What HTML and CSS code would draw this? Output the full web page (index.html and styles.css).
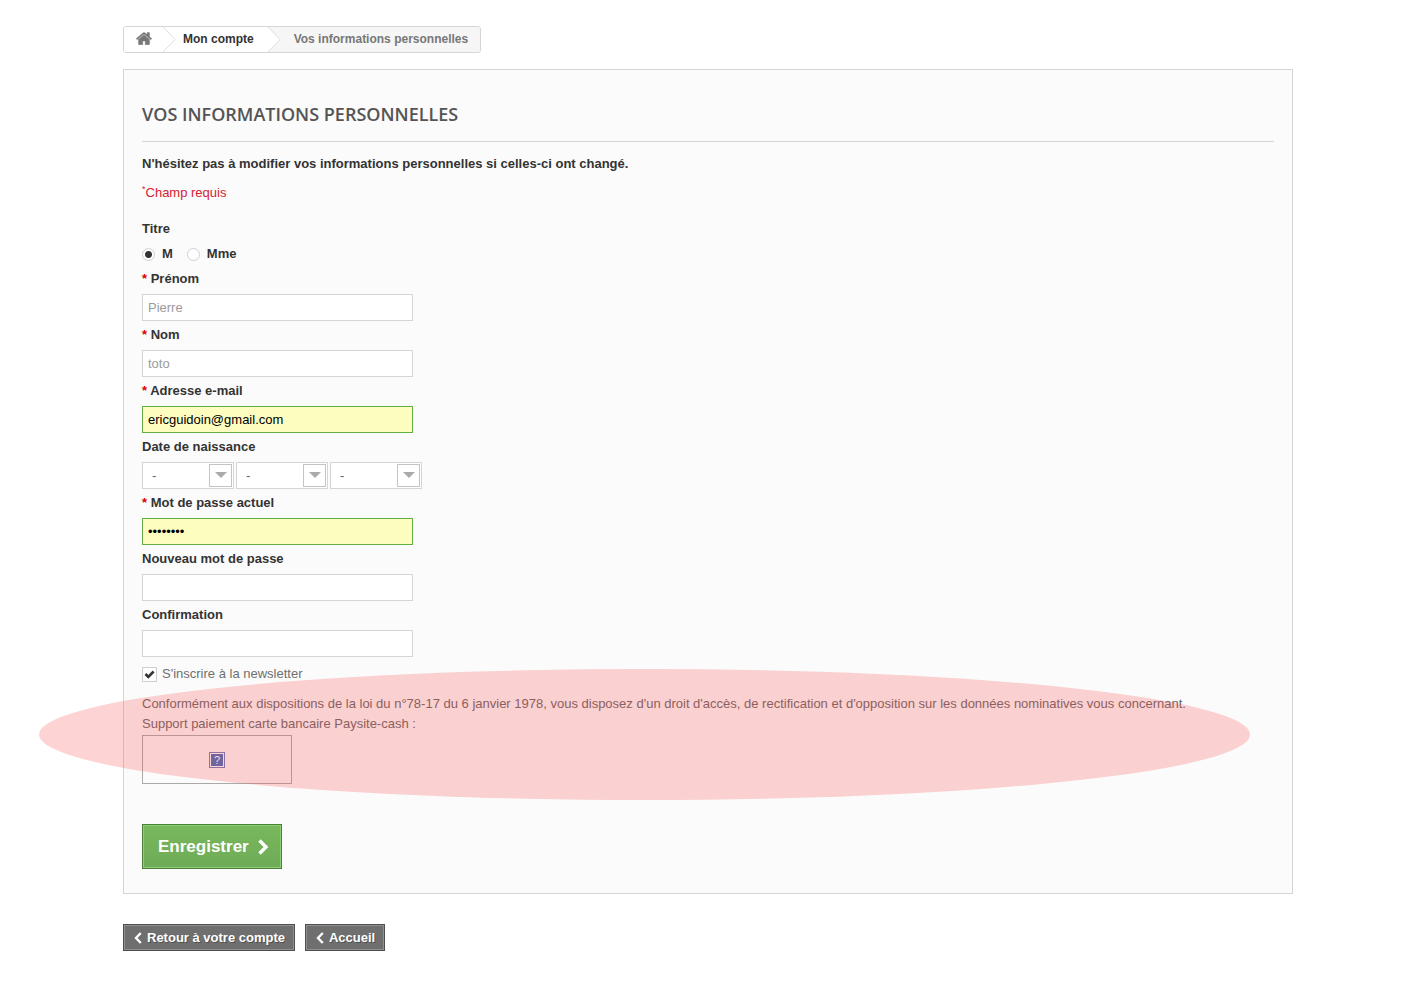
FILE: index.html
```html
<!DOCTYPE html>
<html lang="fr">
<head>
<meta charset="utf-8">
<title>Vos informations personnelles</title>
<meta name="viewport" content="width=device-width, initial-scale=1">
<link rel="stylesheet" href="styles.css">
</head>
<body>
<main class="page">
  <nav class="breadcrumb" aria-label="Fil d'Ariane">
    <a class="crumb crumb-home" href="#" aria-label="Accueil">
      <svg width="16" height="13" viewBox="0 230 1664 1320" aria-hidden="true"><path d="M1408 992v480q0 26-19 45t-45 19h-384v-384h-256v384h-384q-26 0-45-19t-19-45v-480q0-1 .5-3t.5-3l575-474 575 474q1 2 1 6zm223-69l-62 74q-8 9-21 11h-3q-13 0-21-7l-692-577-692 577q-12 8-24 7-13-2-21-11l-62-74q-8-10-7-23.500t11-21.500l719-599q32-26 76-26t76 26l244 204v-195q0-14 9-23t23-9h192q14 0 23 9t9 23v408l219 182q10 8 11 21.500t-7 23.500z" fill="#777" stroke="#777" stroke-width="40"/></svg>
    </a>
    <svg class="crumb-arrow" width="14" height="25" viewBox="0 0 14 25" aria-hidden="true"><path d="M0 0 12 12.500 0 25" fill="#fff" stroke="#ddd"/></svg>
    <a class="crumb" href="#">Mon compte</a>
    <svg class="crumb-arrow crumb-arrow-last" width="14" height="25" viewBox="0 0 14 25" aria-hidden="true"><path d="M0 0 12 12.500 0 25" fill="#fff" stroke="#ddd"/></svg>
    <span class="crumb crumb-current">Vos informations personnelles</span>
  </nav>

  <section class="box">
    <h1 class="heading">Vos informations personnelles</h1>
    <p class="intro">N'hésitez pas à modifier vos informations personnelles si celles-ci ont changé.</p>
    <p class="required-note"><sup>*</sup>Champ requis</p>

    <form>
      <fieldset class="titles">
        <legend class="label">Titre</legend>
        <div class="radio-row">
          <label class="radio-label" for="m"><input class="radio" id="m" type="radio" name="titre" checked>M</label>
          <label class="radio-label" for="mme"><input class="radio" id="mme" type="radio" name="titre">Mme</label>
        </div>
      </fieldset>
      <div class="field">
        <label class="label required" for="prenom">Prénom</label>
        <input class="input" id="prenom" type="text" value="Pierre">
      </div>
      <div class="field">
        <label class="label required" for="nom">Nom</label>
        <input class="input" id="nom" type="text" value="toto">
      </div>
      <div class="field">
        <label class="label required" for="email">Adresse e-mail</label>
        <input class="input filled" id="email" type="email" value="ericguidoin@gmail.com">
      </div>
      <div class="field">
        <label class="label" for="jour">Date de naissance</label>
        <div class="selects">
          <span class="select-wrap"><select class="select" id="jour"><option>-</option></select></span>
          <span class="select-wrap"><select class="select" aria-label="Mois"><option>-</option></select></span>
          <span class="select-wrap"><select class="select" aria-label="Année"><option>-</option></select></span>
        </div>
      </div>
      <div class="field">
        <label class="label required" for="mdp">Mot de passe actuel</label>
        <input class="input filled" id="mdp" type="password" value="password">
      </div>
      <div class="field">
        <label class="label" for="nouveau">Nouveau mot de passe</label>
        <input class="input" id="nouveau" type="password">
      </div>
      <div class="field">
        <label class="label" for="confirmation">Confirmation</label>
        <input class="input" id="confirmation" type="password">
      </div>
      <label class="newsletter" for="newsletter"><input class="checkbox" id="newsletter" type="checkbox" checked>S'inscrire à la newsletter</label>

      <div class="legal">
        <p class="legal-text">Conformément aux dispositions de la loi du n°78-17 du 6 janvier 1978, vous disposez d'un droit d'accès, de rectification et d'opposition sur les données nominatives vous concernant.<br>Support paiement carte bancaire Paysite-cash :</p>
        <div class="payment">
          <span class="missing">?</span>
        </div>
        <div class="highlight"></div>
      </div>

      <button class="save" type="submit">Enregistrer
        <svg width="12" height="16" viewBox="0 0 12 16" aria-hidden="true"><path d="M2.500 1.500 9 8l-6.500 6.500" fill="none" stroke="#fff" stroke-width="3.400"/></svg>
      </button>
    </form>
  </section>

  <div class="footer-links">
    <a class="back" href="#"><svg width="8" height="12" viewBox="0 0 8 12" aria-hidden="true"><path d="M6.800 1 2 6l4.800 5" fill="none" stroke="#fff" stroke-width="2.400"/></svg>Retour à votre compte</a>
    <a class="back" href="#"><svg width="8" height="12" viewBox="0 0 8 12" aria-hidden="true"><path d="M6.800 1 2 6l4.800 5" fill="none" stroke="#fff" stroke-width="2.400"/></svg>Accueil</a>
  </div>
</main>
</body>
</html>
```
FILE: styles.css
```css
*, *::before, *::after { box-sizing: border-box; }
body {
  margin: 0;
  background: #fff;
  color: #6f6f6f;
  font: 13px/20px "Liberation Sans", Arial, sans-serif;
  overflow-x: hidden;
}
p, h1, fieldset { margin: 0; padding: 0; border: 0; }
svg { display: block; flex: none; }
input, select, button { font: inherit; margin: 0; }

.page { padding: 26px 129px 53px 123px; }

.breadcrumb {
  display: inline-flex;
  height: 27px;
  border: 1px solid #d6d4d4;
  border-radius: 3px;
  overflow: hidden;
  font-size: 12px;
  font-weight: bold;
  line-height: 24px;
  vertical-align: top;
}
.crumb { padding: 0 14px 0 6px; color: #333; background: #fff; text-decoration: none; }
.crumb-home { padding: 5px 11px 5px 12px; }
.crumb-arrow-last { background: #f6f6f6; }
.crumb-current { padding: 0 12px; color: #777; background: #f6f6f6; }

.box {
  margin-top: 16px;
  padding: 32px 18px 24px;
  border: 1px solid #d6d4d4;
  background: #fbfbfb;
}
.heading {
  margin-bottom: 12px;
  padding-bottom: 15px;
  border-bottom: 1px solid #d6d4d4;
  color: #555454;
  font: 600 18px/24px "Open Sans", sans-serif;
  text-transform: uppercase;
}
.intro { color: #333; font-weight: bold; }
.required-note { margin: 9px 0 16px; color: #d5202f; }
.required-note sup { font-size: 9px; line-height: 0; }

.label { display: block; padding: 0; color: #333; font-weight: bold; }
.required::before { content: "* "; color: #e00000; }
.radio-row { display: flex; gap: 14px; margin: 5px 0; }
.radio-label { display: flex; align-items: center; gap: 7px; color: #333; font-weight: bold; }
.radio, .checkbox {
  appearance: none;
  flex: none;
  border: 1px solid #d0d0d0;
  background: #fff;
}
.radio { width: 13px; height: 13px; border-radius: 50%; }
.radio:checked { background: radial-gradient(circle, #333 0 3px, #fff 4px); }

.field { display: flex; flex-direction: column; gap: 5px; margin-bottom: 4px; }
.input {
  width: 271px;
  height: 27px;
  padding: 0 5px;
  border: 1px solid #d6d4d4;
  border-radius: 0;
  background: #fff;
  color: #9c9b9b;
}
.filled { border-color: #62ad44; background: #fdfdc0; color: #000; }

.selects { display: flex; gap: 2px; }
.select-wrap { position: relative; display: flex; }
.select {
  appearance: none;
  width: 92px;
  height: 27px;
  padding: 0 9px;
  border: 1px solid #d6d4d4;
  border-radius: 0;
  background: #fff;
  color: #666;
}
.select-wrap::before {
  content: "";
  position: absolute;
  top: 2px;
  right: 2px;
  width: 23px;
  height: 23px;
  border: 1px solid #c4c4c4;
  background: #fff;
  pointer-events: none;
}
.select-wrap::after {
  content: "";
  position: absolute;
  top: 10px;
  right: 7px;
  border: solid transparent;
  border-width: 6px 6px 0;
  border-top-color: #aaa;
  pointer-events: none;
}

.newsletter { display: flex; align-items: center; gap: 5px; margin-top: 7px; }
.checkbox {
  width: 15px;
  height: 15px;
  background: #fff url("data:image/svg+xml,%3Csvg xmlns='http://www.w3.org/2000/svg' viewBox='0 0 13 13'%3E%3Cpath d='M2.500 6 5.300 8.800 10.600 3.500' fill='none' stroke='%23333' stroke-width='2.600'/%3E%3C/svg%3E") center / 13px 13px no-repeat;
}

.legal { position: relative; margin-top: 10px; }
.legal-text { margin-bottom: 1px; color: #666; }
.payment {
  display: flex;
  align-items: center;
  justify-content: center;
  width: 150px;
  height: 49px;
  border: 1px solid #aaa;
}
.missing {
  width: 16px;
  height: 16px;
  border: 1px solid #6a7cc0;
  outline: 1px solid #fff;
  outline-offset: -2px;
  background: #3f6cbc;
  color: #fff;
  font-size: 11px;
  line-height: 14px;
  text-align: center;
}
.highlight {
  position: absolute;
  top: -25px;
  left: -103px;
  width: calc(100% + 79px);
  height: 131px;
  border-radius: 50%;
  background: rgba(250, 80, 80, .25);
  pointer-events: none;
}

.save {
  display: flex;
  align-items: center;
  gap: 8px;
  height: 45px;
  margin-top: 40px;
  padding: 0 12px 0 15px;
  border: 1px solid #4a8036;
  box-shadow: inset 0 0 0 1px #8fcf78;
  background: linear-gradient(#78b85c, #6fab57);
  color: #fff;
  font-size: 17px;
  font-weight: bold;
}

.footer-links { display: flex; gap: 10px; margin-top: 30px; }
.back {
  display: flex;
  align-items: center;
  gap: 5px;
  height: 27px;
  padding: 0 9px 0 10px;
  border: 1px solid #4d4d4d;
  box-shadow: inset 0 0 0 1px #909090;
  background: #6f6f6f;
  color: #fff;
  font-weight: bold;
  text-decoration: none;
  text-shadow: 1px 1px rgba(0, 0, 0, .3);
}
```
